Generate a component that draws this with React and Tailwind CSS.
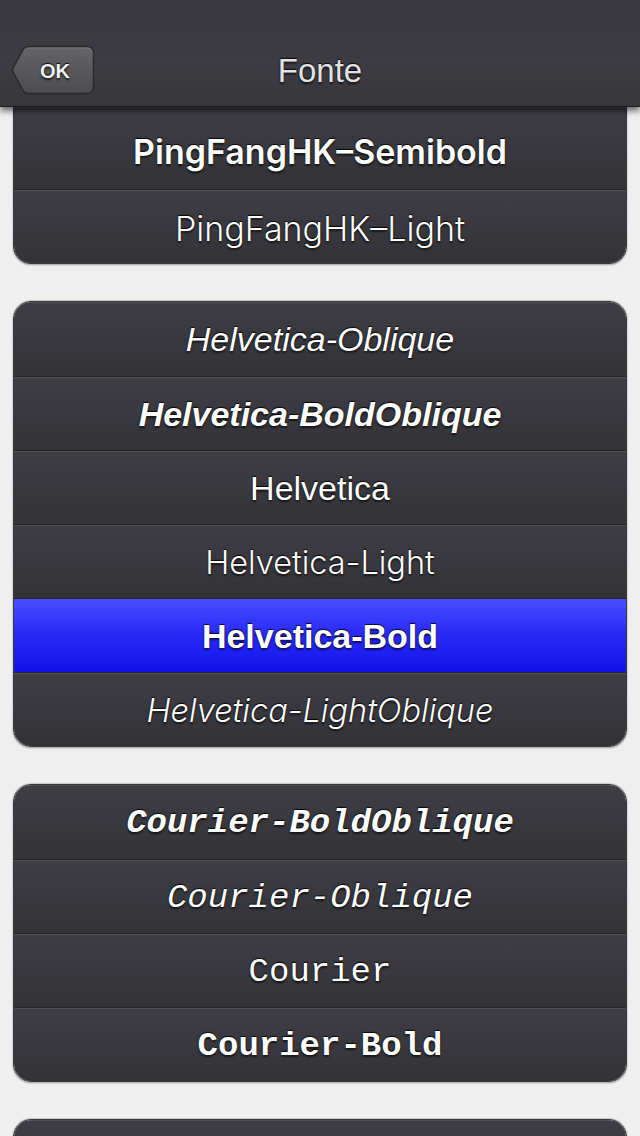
import React from "react";

const shadow = "[text-shadow:0_-1px_1px_rgba(0,0,0,0.9),0_2px_2px_rgba(0,0,0,0.6)]";

function Row({ label, font, h = "h-[74px]", first, selected, extra = "" }) {
  return (
    <div
      className={`${h} flex items-center justify-center ${first ? "" : "border-t border-[#26262a]"} ${
        selected
          ? "bg-[linear-gradient(180deg,#4a4eff_0%,#2a2cf6_45%,#1212ea_100%)]"
          : "bg-[linear-gradient(180deg,#3e3e44_0%,#38383e_50%,#323237_100%)] shadow-[inset_0_1px_0_rgba(255,255,255,0.09)]"
      } ${extra}`}
    >
      <span className={`leading-none text-white ${shadow} ${font}`}>{label}</span>
    </div>
  );
}

const sans = "text-[34px] font-['Liberation_Sans',Arial,sans-serif]";
const inter = "text-[34px] font-['Inter','Noto_Sans',sans-serif]";
const interLight = "text-[32.5px] font-['Inter','Noto_Sans',sans-serif] font-light";
const mono = "text-[34px] font-['Liberation_Mono','Courier_New',monospace]";

export default function App() {
  return (
    <div className="w-[640px] h-[1136px] overflow-hidden bg-[#efeff0] relative">
      <div className="relative z-10 h-[107px] bg-[linear-gradient(180deg,#38383e_0%,#3c3c42_60%,#36363b_100%)] border-b border-[#1e1e21] shadow-[0_4px_6px_rgba(0,0,0,0.55)] flex items-end pb-[12px]">
        <div className="relative w-[640px] h-[50px] flex items-center justify-center">
          <button className="absolute left-[11px] top-[1px] w-[84px] h-[50px] flex items-center justify-center">
            <svg className="absolute inset-0" width="84" height="50" viewBox="0 0 84 50">
              <defs>
                <linearGradient id="okg" x1="0" y1="0" x2="0" y2="1">
                  <stop offset="0" stopColor="#646469" />
                  <stop offset="1" stopColor="#4c4c51" />
                </linearGradient>
              </defs>
              <path
                d="M17 1.5 H76 Q82.5 1.5 82.5 8 V42 Q82.5 48.5 76 48.5 H17 Q14.5 48.5 12.8 46.6 L2 27 Q1 25 2 23 L12.8 3.4 Q14.5 1.5 17 1.5 Z"
                fill="url(#okg)"
                stroke="#2a2a2e"
                strokeWidth="1.5"
              />
              <path d="M17 3 H76 Q81 3 81 8" fill="none" stroke="rgba(255,255,255,0.12)" strokeWidth="1" />
            </svg>
            <span className={`relative text-[20px] leading-none text-[#f2f2f2] font-bold font-['Liberation_Sans',Arial,sans-serif] ${shadow} ml-[4px] mt-[2px]`}>
              OK
            </span>
          </button>
          <span className={`text-[33px] leading-none text-[#e2e2e4] font-['Liberation_Sans',Arial,sans-serif] ${shadow} mt-[2px]`}>Fonte</span>
        </div>
      </div>

      <div className="flex flex-col gap-[37px] px-[13px]">
        <div className="rounded-b-[18px] overflow-hidden border border-t-0 border-[#3a3a3e] shadow-[0_1px_2px_rgba(0,0,0,0.35)]">
          <Row label="PingFangHK–Semibold" font={`${inter} font-semibold`} h="h-[82px]" first extra="pt-[8px]" />
          <Row label="PingFangHK–Light" font={`${inter} font-light`} extra="pt-[4px]" />
        </div>

        <div className="rounded-[18px] overflow-hidden border border-[#3a3a3e] shadow-[0_1px_2px_rgba(0,0,0,0.35),0_-1px_1px_rgba(0,0,0,0.15)]">
          <Row label="Helvetica-Oblique" font={`${sans} italic`} first />
          <Row label="Helvetica-BoldOblique" font={`${sans} italic font-bold`} />
          <Row label="Helvetica" font={sans} />
          <Row label="Helvetica-Light" font={interLight} extra="pt-[4px]" />
          <Row label="Helvetica-Bold" font={`${sans} font-bold`} selected />
          <Row label="Helvetica-LightOblique" font={`${interLight} italic`} extra="pt-[4px]" />
        </div>

        <div className="rounded-[18px] overflow-hidden border border-[#3a3a3e] shadow-[0_1px_2px_rgba(0,0,0,0.35),0_-1px_1px_rgba(0,0,0,0.15)]">
          <Row label="Courier-BoldOblique" font={`${mono} italic font-bold`} first extra="pt-[2px]" />
          <Row label="Courier-Oblique" font={`${mono} italic`} extra="pt-[2px]" />
          <Row label="Courier" font={mono} extra="pt-[2px]" />
          <Row label="Courier-Bold" font={`${mono} font-bold`} extra="pt-[2px]" />
        </div>

        <div className="rounded-[18px] overflow-hidden border border-[#3a3a3e] shadow-[0_1px_2px_rgba(0,0,0,0.35),0_-1px_1px_rgba(0,0,0,0.15)]">
          <Row label="" font={sans} first />
        </div>
      </div>
    </div>
  );
}
